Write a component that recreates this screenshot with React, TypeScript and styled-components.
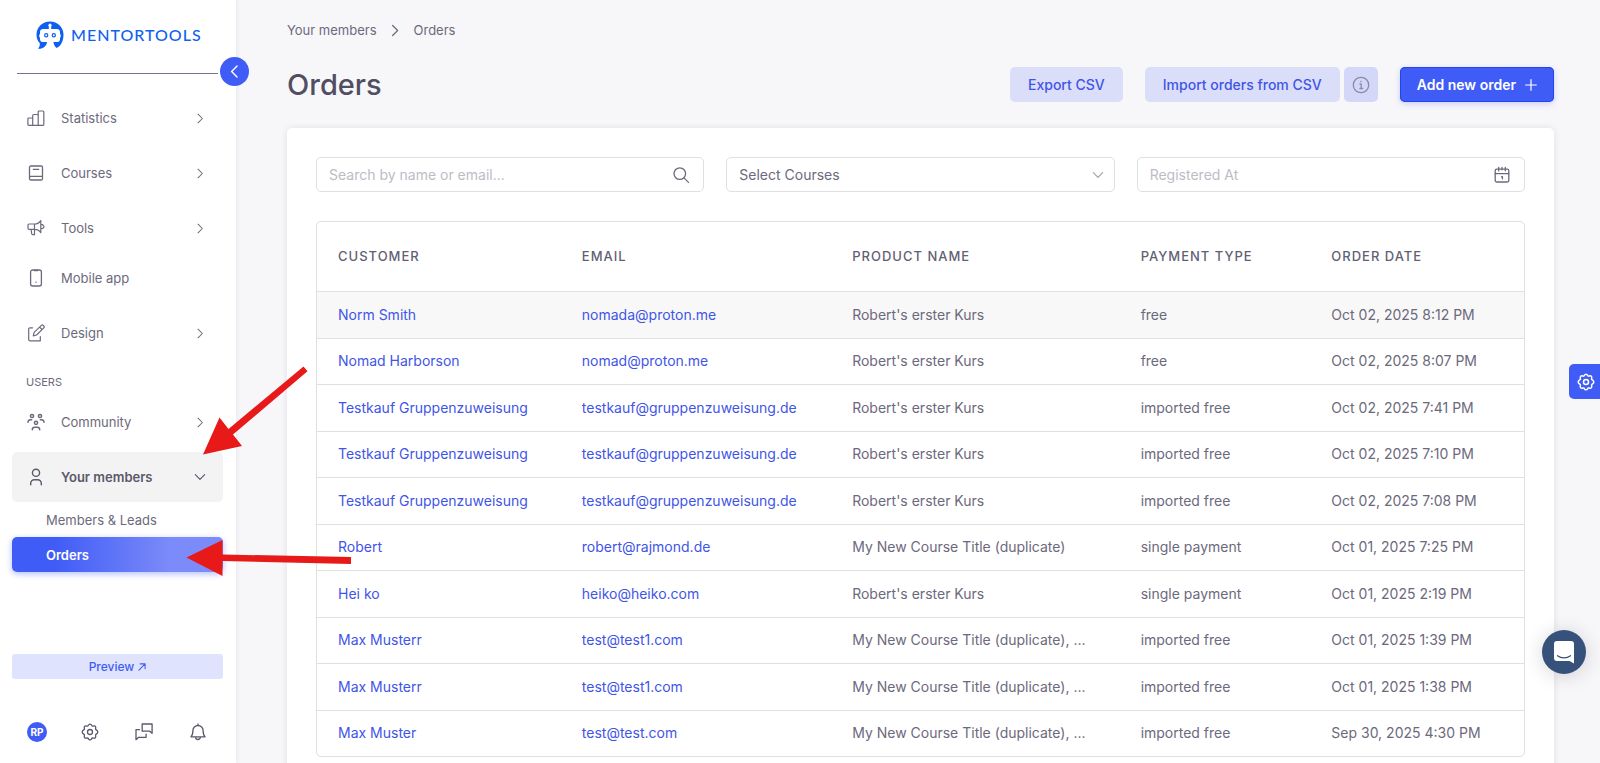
import React from "react";
import styled, { createGlobalStyle, css } from "styled-components";

const color = {
  primary: "#405cf6",
  link: "#3f55e8",
  text: "#6c697c",
  strong: "#514e64",
  muted: "#bdbcc5",
  line: "#e0e0e3",
  soft: "#dbdef9",
  page: "#f7f7fa",
};

const GlobalStyle = createGlobalStyle`
  * { box-sizing: border-box; }
  body {
    margin: 0;
    background: ${color.page};
    color: ${color.text};
    font-family: Inter, "Liberation Sans", sans-serif;
    font-size: 13px;
    line-height: 20px;
  }
  a { color: inherit; text-decoration: none; }
  button, input, select { font: inherit; color: inherit; }
  ul { list-style: none; margin: 0; padding: 0; }
`;

const Shell = styled.div`
  position: relative;
  display: flex;
  height: 100vh;
  overflow: hidden;
`;

/* Sidebar */

const Sidebar = styled.aside`
  position: relative;
  z-index: 1;
  flex: 0 0 236px;
  display: flex;
  flex-direction: column;
  padding: 20px 13px 16px 12px;
  background: #fff;
  box-shadow: 0 0 5px rgba(60, 60, 90, 0.12);
`;

const Brand = styled.a`
  display: flex;
  align-items: center;
  gap: 6px;
  height: 30px;
  padding-left: 23px;
  color: #0f5ff0;
  font-family: Lato, sans-serif;
  font-size: 16px;
  font-weight: 500;
  letter-spacing: 1px;
`;

const Divider = styled.hr`
  width: 201px;
  margin: 23px 0 19px 5px;
  border: 0;
  border-top: 1px solid #77748a;
`;

const Collapse = styled.button`
  position: absolute;
  top: 57px;
  right: -13px;
  display: grid;
  place-items: center;
  width: 29px;
  height: 29px;
  padding: 0;
  border: 0;
  border-radius: 50%;
  background: ${color.primary};
  color: #fff;
`;

const NavItem = styled.li<{ $tight?: boolean }>`
  margin-bottom: ${(p) => (p.$tight ? 0 : 5)}px;
`;

const NavLink = styled.a<{ $open?: boolean }>`
  display: grid;
  grid-template-columns: 24px 1fr 12px;
  column-gap: 13px;
  align-items: center;
  height: 50px;
  padding: 0 17px 0 12px;
  border-radius: 5px;
  ${(p) =>
    p.$open &&
    css`
      background: #f3f3f3;
      color: #5b586c;
      font-weight: 600;
    `}
  svg { justify-self: center; }
`;

const SectionLabel = styled.h2`
  margin: 0;
  padding: 14px 14px 5px;
  font-size: 11px;
  font-weight: 400;
  line-height: 20px;
`;

const SubLink = styled.a<{ $active?: boolean }>`
  display: flex;
  align-items: center;
  height: 35px;
  padding-left: 34px;
  border-radius: 5px;
  ${(p) =>
    p.$active &&
    css`
      background: linear-gradient(90deg, #405cf6 20%, #7b8bf9 75%);
      box-shadow: 0 2px 6px rgba(64, 92, 246, 0.4);
      color: #fff;
      font-weight: 600;
    `}
`;

const Foot = styled.div`
  margin-top: auto;
`;

const Preview = styled.a`
  display: flex;
  align-items: center;
  justify-content: center;
  gap: 4px;
  height: 25px;
  border-radius: 3px;
  background: #dfe3fd;
  color: ${color.primary};
  font-size: 12px;
  font-weight: 500;
`;

const FootIcons = styled.div`
  display: flex;
  justify-content: space-between;
  margin-top: 38px;
  padding: 0 14px 0 15px;
`;

const IconButton = styled.button`
  display: grid;
  place-items: center;
  width: 22px;
  height: 30px;
  padding: 0;
  border: 0;
  background: none;
  color: #5b586c;
`;

const Avatar = styled(IconButton)`
  align-self: center;
  height: 20px;
  width: 20px;
  border-radius: 50%;
  background: ${color.primary};
  color: #fff;
  font-size: 10px;
  font-weight: 700;
  line-height: 20px;
`;

/* Main column */

const Main = styled.main`
  flex: 1;
  min-width: 0;
  padding: 20px 46px 40px 51px;
  overflow-y: auto;
  scrollbar-width: none;
`;

const Breadcrumb = styled.nav`
  display: flex;
  align-items: center;
  gap: 12px;
`;

const PageHead = styled.header`
  display: flex;
  align-items: center;
  justify-content: space-between;
  margin: 25px 0 24px;
`;

const Title = styled.h1`
  margin: 0;
  color: ${color.strong};
  font-size: 29px;
  font-weight: 500;
  line-height: 39px;
`;

const Actions = styled.div`
  display: flex;
  gap: 22px;
`;

const ActionPair = styled.div`
  display: flex;
  gap: 4px;
`;

const Button = styled.button<{ $kind?: "primary" | "info" }>`
  display: flex;
  align-items: center;
  justify-content: center;
  gap: 9px;
  height: 35px;
  padding: 0 18px;
  border: 0;
  border-radius: 5px;
  background: ${color.soft};
  color: ${color.link};
  font-size: 14px;
  font-weight: 500;
  white-space: nowrap;
  ${(p) =>
    p.$kind === "info" &&
    css`
      width: 34px;
      padding: 0;
      background: #d3d7f8;
      color: #8b8ba8;
    `}
  ${(p) =>
    p.$kind === "primary" &&
    css`
      padding: 0 17px;
      background: ${color.primary};
      box-shadow: inset 0 0 0 1px #2445ee, 0 2px 6px rgba(64, 92, 246, 0.25);
      color: #fff;
      font-weight: 600;
    `}
`;

const Card = styled.section`
  padding: 29px;
  border-radius: 5px;
  background: #fff;
  box-shadow: 0 0 6px rgba(60, 60, 90, 0.12);
`;

const Filters = styled.form`
  display: grid;
  grid-template-columns: repeat(3, 1fr);
  gap: 22px;
  margin-bottom: 29px;
`;

const Field = styled.label<{ $select?: boolean }>`
  display: flex;
  align-items: center;
  height: 35px;
  padding: 0 ${(p) => (p.$select ? 10 : 13)}px 0 12px;
  border: 1px solid ${color.line};
  border-radius: 5px;
  background: #fff;
  ${(p) =>
    p.$select &&
    css`
      svg { color: #a3a1ae; }
    `}
`;

const controlStyle = css`
  flex: 1;
  min-width: 0;
  height: 33px;
  padding: 0;
  border: 0;
  outline: 0;
  background: none;
`;

const TextInput = styled.input`
  ${controlStyle}
  font-size: 14px;
  &::placeholder { color: ${color.muted}; opacity: 1; }
`;

const Select = styled.select`
  ${controlStyle}
  font-size: 14px;
  appearance: none;
`;

const TableFrame = styled.div`
  border: 1px solid ${color.line};
  border-radius: 5px;
  overflow: hidden;
`;

const Table = styled.table`
  width: 100%;
  table-layout: fixed;
  border-collapse: collapse;
  text-align: left;
`;

const HeadCell = styled.th<{ $width: string }>`
  width: ${(p) => p.$width};
  height: 69px;
  padding: 0 0 0 21px;
  color: #625f73;
  font-weight: 500;
  letter-spacing: 1px;
  text-transform: uppercase;
`;

const Row = styled.tr`
  height: 46px;
  border-top: 1px solid ${color.line};
  &:nth-child(odd) { height: 47px; }
  &:first-child { background: #f8f8f8; }
`;

const Cell = styled.td`
  padding: 0 0 0 21px;
  font-size: 14px;
  white-space: nowrap;
  a { color: ${color.link}; }
`;

/* Floating controls and annotations */

const SettingsTab = styled.button`
  position: absolute;
  z-index: 2;
  top: 364px;
  right: 0;
  display: grid;
  place-items: center;
  width: 31px;
  height: 35px;
  padding: 0 0 0 3px;
  border: 0;
  border-radius: 5px 0 0 5px;
  background: ${color.primary};
  color: #fff;
`;

const ChatButton = styled.button`
  position: absolute;
  z-index: 2;
  right: 14px;
  bottom: 89px;
  display: grid;
  place-items: center;
  width: 44px;
  height: 44px;
  padding: 0;
  border: 0;
  border-radius: 50%;
  background: #36517a;
  color: #fff;
  box-shadow: 0 2px 20px rgba(0, 0, 0, 0.16);
`;

const Annotations = styled.svg`
  position: absolute;
  z-index: 3;
  top: 360px;
  left: 180px;
  pointer-events: none;
`;

/* Icons */

type IconProps = { size?: number; children: React.ReactNode; weight?: number };

const Icon = ({ size = 18, weight = 1.2, children }: IconProps) => (
  <svg
    width={size}
    height={size}
    viewBox="0 0 18 18"
    fill="none"
    stroke="currentColor"
    strokeWidth={weight}
    strokeLinecap="round"
    strokeLinejoin="round"
    aria-hidden="true"
  >
    {children}
  </svg>
);

const ChartIcon = () => (
  <Icon>
    <path d="M1.9 9h3.8v7.4H1.9a1 1 0 0 1-1-1V10a1 1 0 0 1 1-1ZM6.7 5.5h3.5a1 1 0 0 1 1 1v9.9H5.7V6.5a1 1 0 0 1 1-1ZM12.2 2h3.6a1 1 0 0 1 1 1v12.4a1 1 0 0 1-1 1h-4.6V3a1 1 0 0 1 1-1Z" />
  </Icon>
);
const BookIcon = () => (
  <Icon weight={1.3}>
    <path d="M3.800 2h10.400a1.300 1.300 0 0 1 1.300 1.300v11.400a1.300 1.300 0 0 1-1.300 1.300H3.800a1.300 1.300 0 0 1-1.300-1.300V3.300A1.300 1.300 0 0 1 3.800 2ZM2.500 13.600a1.300 1.300 0 0 1 1.300-1.300h11.700M6.300 5.300h5.400" />
  </Icon>
);
const MegaphoneIcon = () => (
  <Icon>
    <path d="M2 5h5.5v5.3H2A1 1 0 0 1 1 9.3V6a1 1 0 0 1 1-1ZM7.5 5c2.7 0 5-1.2 6.3-3.4v12c-1.300-2.200-3.600-3.300-6.300-3.300M13.800 5.600h1.300a1 1 0 0 1 1 .9c.5.200.9.600.9 1.200s-.4 1-.9 1.100a1 1 0 0 1-1 .9h-1.300M4.100 10.300l.6 4.500a1 1 0 0 0 1 .9h1.800v-5.400" />
  </Icon>
);
const PhoneIcon = () => (
  <Icon weight={1.300}>
    <rect x="3.600" y="1" width="10.800" height="16" rx="2" />
    <path d="M7.500 1.500h3M8.900 13.200h.2" />
  </Icon>
);
const EditIcon = () => (
  <Icon>
    <path d="M5.500 3.800H3a1.300 1.300 0 0 0-1.300 1.300v10.400A1.300 1.300 0 0 0 3 16.800h10.300v-4.300M6.300 11.800l.8-3.400 7.300-7a1.300 1.300 0 0 1 1.800 0l.6.6a1.300 1.300 0 0 1 0 1.800l-7.200 7.200-3.300.8ZM12.700 3.200l2.300 2.300" />
  </Icon>
);
const CommunityIcon = () => (
  <Icon weight={1.5}>
    <circle cx="5" cy="3" r="1.600" />
    <circle cx="13" cy="3" r="1.600" />
    <circle cx="9" cy="9.800" r="1.600" />
    <path d="M1 9.300V9a2.400 2.400 0 0 1 2.400-2.200h1.300M17 9.300V9a2.400 2.400 0 0 0-2.400-2.200h-1.300M5.300 16.800v-.3a2.400 2.400 0 0 1 2.400-2.300h2.600a2.400 2.400 0 0 1 2.400 2.300v.3" />
  </Icon>
);
const PersonIcon = () => (
  <Icon weight={1.4}>
    <circle cx="9" cy="4.800" r="3.600" />
    <path d="M3.700 16.700v-1.400a3.600 3.600 0 0 1 3.600-3.600h3.400a3.600 3.600 0 0 1 3.600 3.600v1.400" />
  </Icon>
);
const GearIcon = ({ weight = 1.3 }: { weight?: number }) => (
  <Icon weight={weight}>
    <circle cx="9" cy="9" r="2.500" />
    <path d="M9 1.200c1.500 0 1.700 1.700 2.300 1.900.7.300 1.900-.9 3 .2s0 2.300.3 2.900c.2.700 2.200.9 2.200 2.800s-2 2.100-2.200 2.800c-.3.600.8 1.800-.3 2.900s-2.300 0-3 .2c-.6.300-.8 1.900-2.300 1.900s-1.700-1.600-2.300-1.900c-.7-.2-1.900.9-3-.2s0-2.300-.3-2.900C3.200 11.100 1.200 10.900 1.200 9s2-2.100 2.200-2.800c.3-.6-.8-1.800.3-2.900s2.300.1 3-.2C7.300 2.900 7.500 1.200 9 1.200Z" />
  </Icon>
);
const MessagesIcon = () => (
  <Icon weight={1.3}>
    <path d="M7.200 1h9.900v9.300l-2.300-2.100H7.200V1ZM4.400 6.700H1v10l2.600-2.400h7.500v-3.200" />
  </Icon>
);
const BellIcon = () => (
  <Icon weight={1.3}>
    <path d="M9 1v1.300M2 13.800c1.600-1.500 1.900-2.900 1.900-6.200a5.100 5.100 0 0 1 10.200 0c0 3.300.3 4.700 1.900 6.200H2ZM6.700 14.200a2.300 2.300 0 0 0 4.600 0" />
  </Icon>
);
const SearchIcon = () => (
  <Icon weight={1.3}>
    <circle cx="7.800" cy="7.600" r="5.800" />
    <path d="M12 11.900l4.500 4.500" />
  </Icon>
);
const CalendarIcon = () => (
  <Icon weight={1.3}>
    <rect x="2.200" y="3.200" width="13.600" height="12.800" rx="1.500" />
    <path d="M2.200 7.700h13.600M5.700 1.500v3.300M9 1.500v2.300M12.300 1.500v3.300M8.500 10.800l.9-.3v2.300" />
  </Icon>
);
const InfoIcon = () => (
  <Icon weight={1.3}>
    <circle cx="9" cy="9" r="7.700" />
    <path d="M8 8h1.200v4.400M7.900 12.500h2.700M8.900 5.500h.2" />
  </Icon>
);
const ChevronRight = ({ size = 11 }: { size?: number }) => (
  <Icon size={size} weight={1.7}>
    <path d="M5 2l7 7-7 7" />
  </Icon>
);
const ChevronLeft = () => (
  <Icon size={13} weight={2}>
    <path d="M12.500 1.500L5 9l7.500 7.500" />
  </Icon>
);
const ChevronDown = () => (
  <Icon size={12} weight={1.7}>
    <path d="M2 5.500l7 7 7-7" />
  </Icon>
);
const PlusIcon = () => (
  <Icon size={12} weight={1.8}>
    <path d="M9 1v16M1 9h16" />
  </Icon>
);
const ArrowUpRight = () => (
  <Icon size={8} weight={2.4}>
    <path d="M2 16L16 2M5 2h11v11" />
  </Icon>
);

const LogoMark = () => (
  <svg width="30" height="30" viewBox="0 0 30 30" aria-hidden="true">
    <path
      fill="#0f5ff0"
      d="M15 1.500C7.400 1.500 1.500 7.200 1.500 14.500c0 3.700 1.300 6.600 3.300 8.700.2 2.200-.4 4-1.800 5.600 4.700.4 8.200-1.800 9.100-6.700H8.200c-1.900 0-3.100-1-3.200-2.600v-1.600c-.9-.4-1.200-3.300 0-3.800V12c0-1.900 1.200-3 3.200-3h5.600V6.600a1.700 1.700 0 1 1 2.400 0V9h5.600c2 0 3.200 1.100 3.200 3v2.100c1.200.5.900 3.400 0 3.800v1.600c-.1 1.600-1.300 2.600-3.200 2.600h-3.400c.3 2.600 1.500 4.700 3.400 6 4.300-2.400 6.700-7 6.700-13.600 0-7.300-5.900-13-13.500-13Z"
    />
    <circle cx="11.200" cy="15.200" r="1.600" fill="none" stroke="#0f5ff0" strokeWidth="1.200" />
    <circle cx="18.800" cy="15.200" r="1.600" fill="none" stroke="#0f5ff0" strokeWidth="1.200" />
  </svg>
);

const ChatIcon = () => (
  <svg width="24" height="26" viewBox="0 0 24 26" aria-hidden="true">
    <path fill="#fff" d="M5 2h14a3 3 0 0 1 3 3v19.500L17.500 22H5a3 3 0 0 1-3-3V5a3 3 0 0 1 3-3Z" />
    <path fill="none" stroke="#36517a" strokeWidth="1.200" strokeLinecap="round" d="M5.500 16.700c3.700 2.800 9.300 2.800 13 0" />
  </svg>
);

/* Data */

type NavEntry = { label: string; icon: React.ReactNode; leaf?: boolean; tight?: boolean };

const mainNav: NavEntry[] = [
  { label: "Statistics", icon: <ChartIcon /> },
  { label: "Courses", icon: <BookIcon /> },
  { label: "Tools", icon: <MegaphoneIcon />, tight: true },
  { label: "Mobile app", icon: <PhoneIcon />, leaf: true },
  { label: "Design", icon: <EditIcon />, tight: true },
];

const columns = [
  { label: "Customer", width: "20.2%" },
  { label: "Email", width: "22.4%" },
  { label: "Product name", width: "23.9%" },
  { label: "Payment type", width: "15.8%" },
  { label: "Order date", width: "17.7%" },
];

const orders = [
  ["Norm Smith", "nomada@proton.me", "Robert's erster Kurs", "free", "Oct 02, 2025 8:12 PM"],
  ["Nomad Harborson", "nomad@proton.me", "Robert's erster Kurs", "free", "Oct 02, 2025 8:07 PM"],
  ["Testkauf Gruppenzuweisung", "testkauf@gruppenzuweisung.de", "Robert's erster Kurs", "imported free", "Oct 02, 2025 7:41 PM"],
  ["Testkauf Gruppenzuweisung", "testkauf@gruppenzuweisung.de", "Robert's erster Kurs", "imported free", "Oct 02, 2025 7:10 PM"],
  ["Testkauf Gruppenzuweisung", "testkauf@gruppenzuweisung.de", "Robert's erster Kurs", "imported free", "Oct 02, 2025 7:08 PM"],
  ["Robert", "robert@rajmond.de", "My New Course Title (duplicate)", "single payment", "Oct 01, 2025 7:25 PM"],
  ["Hei ko", "heiko@heiko.com", "Robert's erster Kurs", "single payment", "Oct 01, 2025 2:19 PM"],
  ["Max Musterr", "test@test1.com", "My New Course Title (duplicate), ...", "imported free", "Oct 01, 2025 1:39 PM"],
  ["Max Musterr", "test@test1.com", "My New Course Title (duplicate), ...", "imported free", "Oct 01, 2025 1:38 PM"],
  ["Max Muster", "test@test.com", "My New Course Title (duplicate), ...", "imported free", "Sep 30, 2025 4:30 PM"],
];

export default function App() {
  return (
    <Shell>
      <GlobalStyle />
      <Sidebar>
        <Brand href="#">
          <LogoMark />
          MENTORTOOLS
        </Brand>
        <Divider />
        <Collapse aria-label="Collapse sidebar">
          <ChevronLeft />
        </Collapse>
        <nav aria-label="Main">
          <ul>
            {mainNav.map((item) => (
              <NavItem key={item.label} $tight={item.tight}>
                <NavLink href="#">
                  {item.icon}
                  <span>{item.label}</span>
                  {!item.leaf && <ChevronRight />}
                </NavLink>
              </NavItem>
            ))}
          </ul>
          <SectionLabel>USERS</SectionLabel>
          <ul>
            <NavItem>
              <NavLink href="#">
                <CommunityIcon />
                <span>Community</span>
                <ChevronRight />
              </NavLink>
            </NavItem>
            <NavItem $tight>
              <NavLink href="#" $open>
                <PersonIcon />
                <span>Your members</span>
                <ChevronDown />
              </NavLink>
            </NavItem>
            <NavItem $tight>
              <SubLink href="#">Members &amp; Leads</SubLink>
            </NavItem>
            <NavItem $tight>
              <SubLink href="#" $active aria-current="page">
                Orders
              </SubLink>
            </NavItem>
          </ul>
        </nav>
        <Foot>
          <Preview href="#">
            Preview
            <ArrowUpRight />
          </Preview>
          <FootIcons>
            <Avatar aria-label="Profile">RP</Avatar>
            <IconButton aria-label="Settings">
              <GearIcon />
            </IconButton>
            <IconButton aria-label="Messages">
              <MessagesIcon />
            </IconButton>
            <IconButton aria-label="Notifications">
              <BellIcon />
            </IconButton>
          </FootIcons>
        </Foot>
      </Sidebar>

      <Main>
        <Breadcrumb aria-label="Breadcrumb">
          <a href="#">Your members</a>
          <ChevronRight size={13} />
          <span>Orders</span>
        </Breadcrumb>
        <PageHead>
          <Title>Orders</Title>
          <Actions>
            <Button>Export CSV</Button>
            <ActionPair>
              <Button>Import orders from CSV</Button>
              <Button $kind="info" aria-label="Import information">
                <InfoIcon />
              </Button>
            </ActionPair>
            <Button $kind="primary">
              Add new order
              <PlusIcon />
            </Button>
          </Actions>
        </PageHead>

        <Card>
          <Filters>
            <Field>
              <TextInput type="text" aria-label="Search" placeholder="Search by name or email..." />
              <SearchIcon />
            </Field>
            <Field $select>
              <Select aria-label="Courses">
                <option>Select Courses</option>
              </Select>
              <ChevronDown />
            </Field>
            <Field>
              <TextInput type="text" aria-label="Registered at" placeholder="Registered At" />
              <CalendarIcon />
            </Field>
          </Filters>
          <TableFrame>
            <Table>
              <thead>
                <tr>
                  {columns.map((c) => (
                    <HeadCell key={c.label} scope="col" $width={c.width}>
                      {c.label}
                    </HeadCell>
                  ))}
                </tr>
              </thead>
              <tbody>
                {orders.map(([customer, email, product, payment, date], i) => (
                  <Row key={i}>
                    <Cell>
                      <a href="#">{customer}</a>
                    </Cell>
                    <Cell>
                      <a href="#">{email}</a>
                    </Cell>
                    <Cell>{product}</Cell>
                    <Cell>{payment}</Cell>
                    <Cell>{date}</Cell>
                  </Row>
                ))}
              </tbody>
            </Table>
          </TableFrame>
        </Card>
      </Main>

      <SettingsTab aria-label="Page settings">
        <GearIcon weight={1.5} />
      </SettingsTab>
      <ChatButton aria-label="Open chat">
        <ChatIcon />
      </ChatButton>

      <Annotations width="180" height="220" viewBox="180 360 180 220" fill="#e81919" aria-hidden="true">
        <path d="M303.500 366.500l4 4.800-74.500 63.200 9 11.500-39 8.500 16.500-37 9 11.500Z" />
        <path d="M186.500 557.500l36-17.500v14.500l128.500 2.500v7l-128.500-3v15Z" />
      </Annotations>
    </Shell>
  );
}
